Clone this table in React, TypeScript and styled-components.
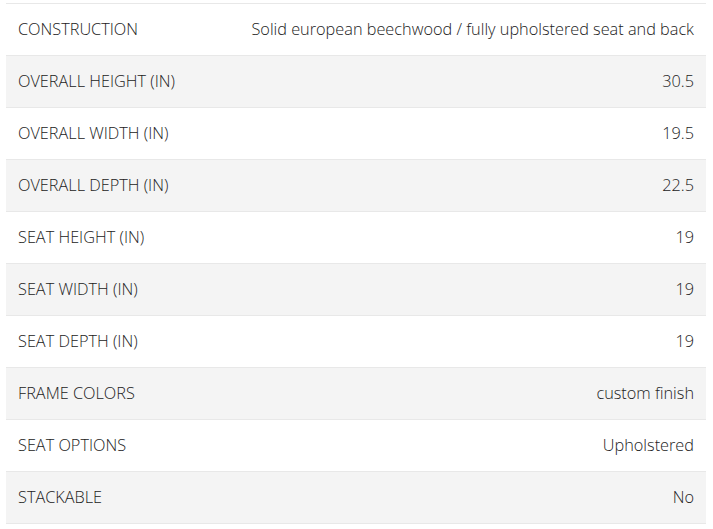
import React from "react";
import styled, { createGlobalStyle } from "styled-components";

const Global = createGlobalStyle`
  html, body { margin: 0; padding: 0; background: #ffffff; }
  body { font-family: "Open Sans", "Liberation Sans", sans-serif; }
`;

const Wrapper = styled.div`
  padding: 3px 7px 0 6px;
`;

const Table = styled.div`
  display: flex;
  flex-direction: column;
  border-bottom: 1px solid #e8e8e8;
`;

const Row = styled.div<{ $shaded: boolean }>`
  display: flex;
  align-items: center;
  justify-content: space-between;
  box-sizing: border-box;
  height: 52px;
  padding: 0 12px 1px 12px;
  border-top: 1px solid #e8e8e8;
  background: ${(p) => (p.$shaded ? "#f4f4f4" : "#ffffff")};
  font-size: 16.3px;
  font-weight: 300;
  color: #222222;
`;

const Label = styled.span`
  text-transform: uppercase;
`;

const Value = styled.span`
  text-align: right;
`;

const specs: [string, string][] = [
  ["Construction", "Solid european beechwood / fully upholstered seat and back"],
  ["Overall Height (in)", "30.5"],
  ["Overall Width (in)", "19.5"],
  ["Overall Depth (in)", "22.5"],
  ["Seat Height (in)", "19"],
  ["Seat Width (in)", "19"],
  ["Seat Depth (in)", "19"],
  ["Frame Colors", "custom finish"],
  ["Seat Options", "Upholstered"],
  ["Stackable", "No"],
];

export default function App() {
  return (
    <>
      <Global />
      <Wrapper>
        <Table>
          {specs.map(([k, v], i) => (
            <Row key={k} $shaded={i % 2 === 1}>
              <Label>{k}</Label>
              <Value>{v}</Value>
            </Row>
          ))}
        </Table>
      </Wrapper>
    </>
  );
}
